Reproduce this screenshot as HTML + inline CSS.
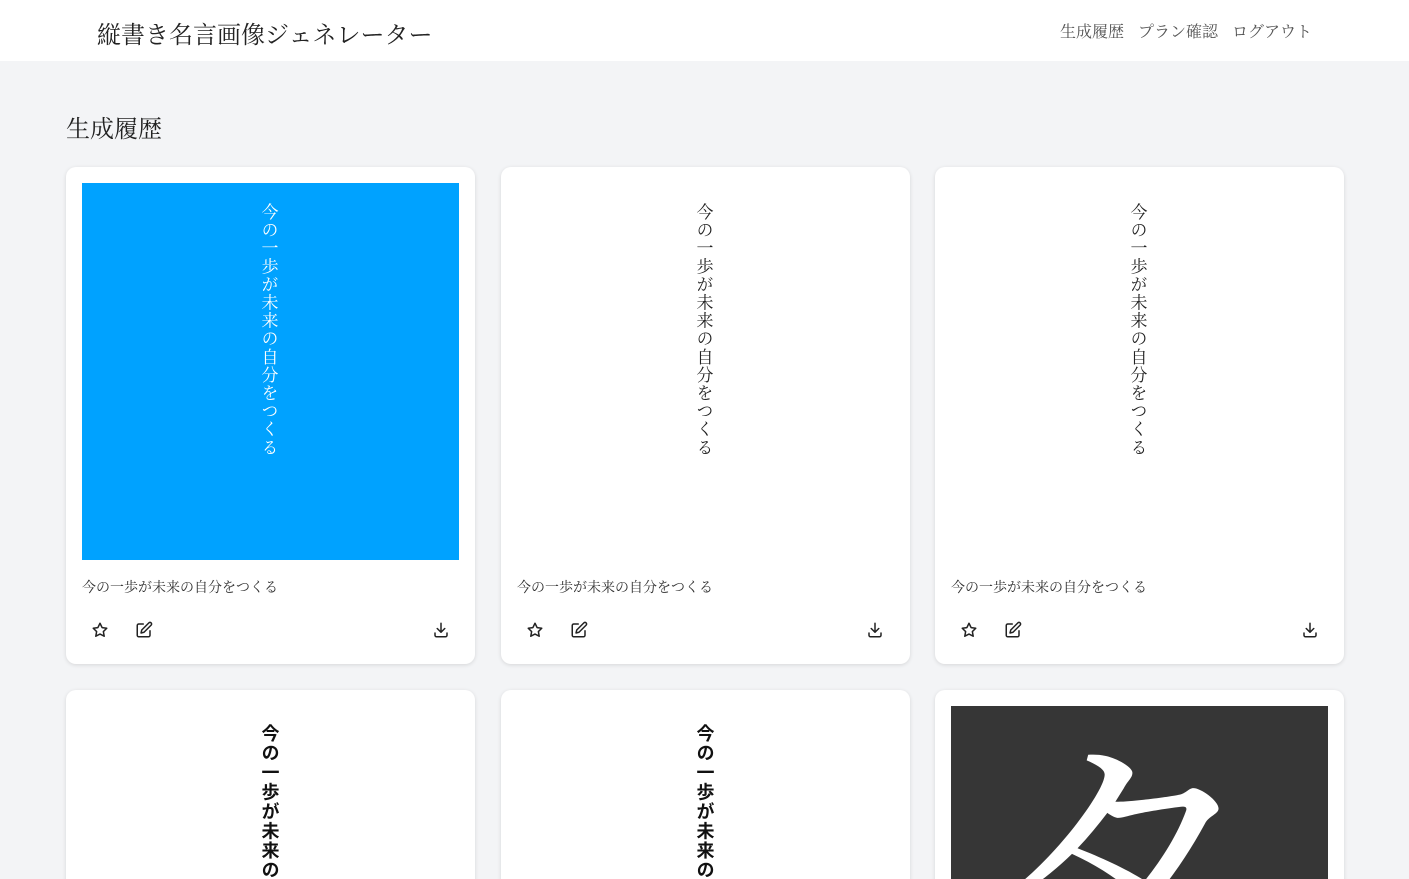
<!DOCTYPE html>
<html><head><meta charset="utf-8"><style>
*{margin:0;padding:0;box-sizing:border-box}
html,body{width:1409px;height:879px;overflow:hidden}
body{background:#f3f4f6;font-family:"Liberation Serif","Noto Serif CJK SC",serif;color:#222;position:relative}
.hdr{height:61px;background:#fff;position:relative}
.hdr h1{position:absolute;left:97px;top:15px;font-size:24px;font-weight:normal;color:#222}
.nav{position:absolute;right:97px;top:19px;font-size:16px;color:#555}
.nav span{margin-left:14px}
h2{position:absolute;left:66px;top:109px;font-size:24px;font-weight:normal;color:#222}
.card{position:absolute;width:409px;background:#fff;border-radius:10px;box-shadow:0 1px 4px rgba(0,0,0,.12);overflow:hidden}
.img{position:absolute;left:16px;top:16px;width:377px;height:377px;overflow:hidden}
.vt{position:absolute;left:-6px;right:0;top:20px;margin:auto;writing-mode:vertical-rl;font-size:17px;letter-spacing:1.1px;width:24px;line-height:24px}
.cap{position:absolute;left:16px;top:410px;font-size:14px;color:#333}
.ic{position:absolute;top:454px}
.b{color:#111;font-family:'Liberation Sans','Noto Sans CJK JP',sans-serif;font-weight:bold;font-size:18px;letter-spacing:1.5px;top:18px;left:-2px}
</style></head><body>
<div class="hdr"><h1>縦書き名言画像ジェネレーター</h1><div class="nav"><span>生成履歴</span><span>プラン確認</span><span>ログアウト</span></div></div>
<h2>生成履歴</h2>

<div class="card" style="left:66px;top:167px;height:497px">
<div class="img" style="background:#00a2ff"><div class="vt" style="color:#fff">今の一歩が未来の自分をつくる</div></div>
<div class="cap">今の一歩が未来の自分をつくる</div>
<svg class="ic" style="left:25px" width="18" height="18" viewBox="0 0 24 24" fill="none" stroke="#222" stroke-width="2" stroke-linejoin="round"><path d="M12 3l2.8 5.8 6.2.9-4.5 4.4 1.1 6.2L12 17.4l-5.6 2.9 1.1-6.2L3 9.7l6.2-.9z"/></svg>
<svg class="ic" style="left:69px" width="18" height="18" viewBox="0 0 24 24" fill="none" stroke="#222" stroke-width="2" stroke-linecap="round" stroke-linejoin="round"><path d="M11 4H5a2 2 0 0 0-2 2v13a2 2 0 0 0 2 2h13a2 2 0 0 0 2-2v-6"/><path d="M18.5 2.5a2.1 2.1 0 0 1 3 3L12 15l-4 1 1-4z"/></svg>
<svg class="ic" style="left:366px" width="18" height="18" viewBox="0 0 24 24" fill="none" stroke="#222" stroke-width="2" stroke-linecap="round" stroke-linejoin="round"><path d="M4 16v3a2 2 0 0 0 2 2h12a2 2 0 0 0 2-2v-3M7 10l5 5 5-5M12 15V3"/></svg>
</div>

<div class="card" style="left:501px;top:167px;height:497px">
<div class="img"><div class="vt" style="color:#222">今の一歩が未来の自分をつくる</div></div>
<div class="cap">今の一歩が未来の自分をつくる</div>
<svg class="ic" style="left:25px" width="18" height="18" viewBox="0 0 24 24" fill="none" stroke="#222" stroke-width="2" stroke-linejoin="round"><path d="M12 3l2.8 5.8 6.2.9-4.5 4.4 1.1 6.2L12 17.4l-5.6 2.9 1.1-6.2L3 9.7l6.2-.9z"/></svg>
<svg class="ic" style="left:69px" width="18" height="18" viewBox="0 0 24 24" fill="none" stroke="#222" stroke-width="2" stroke-linecap="round" stroke-linejoin="round"><path d="M11 4H5a2 2 0 0 0-2 2v13a2 2 0 0 0 2 2h13a2 2 0 0 0 2-2v-6"/><path d="M18.5 2.5a2.1 2.1 0 0 1 3 3L12 15l-4 1 1-4z"/></svg>
<svg class="ic" style="left:365px" width="18" height="18" viewBox="0 0 24 24" fill="none" stroke="#222" stroke-width="2" stroke-linecap="round" stroke-linejoin="round"><path d="M4 16v3a2 2 0 0 0 2 2h12a2 2 0 0 0 2-2v-3M7 10l5 5 5-5M12 15V3"/></svg>
</div>

<div class="card" style="left:935px;top:167px;height:497px">
<div class="img"><div class="vt" style="color:#222">今の一歩が未来の自分をつくる</div></div>
<div class="cap">今の一歩が未来の自分をつくる</div>
<svg class="ic" style="left:25px" width="18" height="18" viewBox="0 0 24 24" fill="none" stroke="#222" stroke-width="2" stroke-linejoin="round"><path d="M12 3l2.8 5.8 6.2.9-4.5 4.4 1.1 6.2L12 17.4l-5.6 2.9 1.1-6.2L3 9.7l6.2-.9z"/></svg>
<svg class="ic" style="left:69px" width="18" height="18" viewBox="0 0 24 24" fill="none" stroke="#222" stroke-width="2" stroke-linecap="round" stroke-linejoin="round"><path d="M11 4H5a2 2 0 0 0-2 2v13a2 2 0 0 0 2 2h13a2 2 0 0 0 2-2v-6"/><path d="M18.5 2.5a2.1 2.1 0 0 1 3 3L12 15l-4 1 1-4z"/></svg>
<svg class="ic" style="left:366px" width="18" height="18" viewBox="0 0 24 24" fill="none" stroke="#222" stroke-width="2" stroke-linecap="round" stroke-linejoin="round"><path d="M4 16v3a2 2 0 0 0 2 2h12a2 2 0 0 0 2-2v-3M7 10l5 5 5-5M12 15V3"/></svg>
</div>

<div class="card" style="left:66px;top:690px;height:260px">
<div class="img"><div class="vt b">今の一歩が未来の自分をつくる</div></div>
</div>
<div class="card" style="left:501px;top:690px;height:260px">
<div class="img"><div class="vt b">今の一歩が未来の自分をつくる</div></div>
</div>
<div class="card" style="left:935px;top:690px;height:260px">
<div class="img" style="background:#363636"><div style="position:absolute;left:18px;top:-14px;font-family:'Noto Serif CJK JP','Noto Serif CJK SC',serif;font-size:295px;line-height:330px;color:#fff">タ</div></div>
</div>
</body></html>
